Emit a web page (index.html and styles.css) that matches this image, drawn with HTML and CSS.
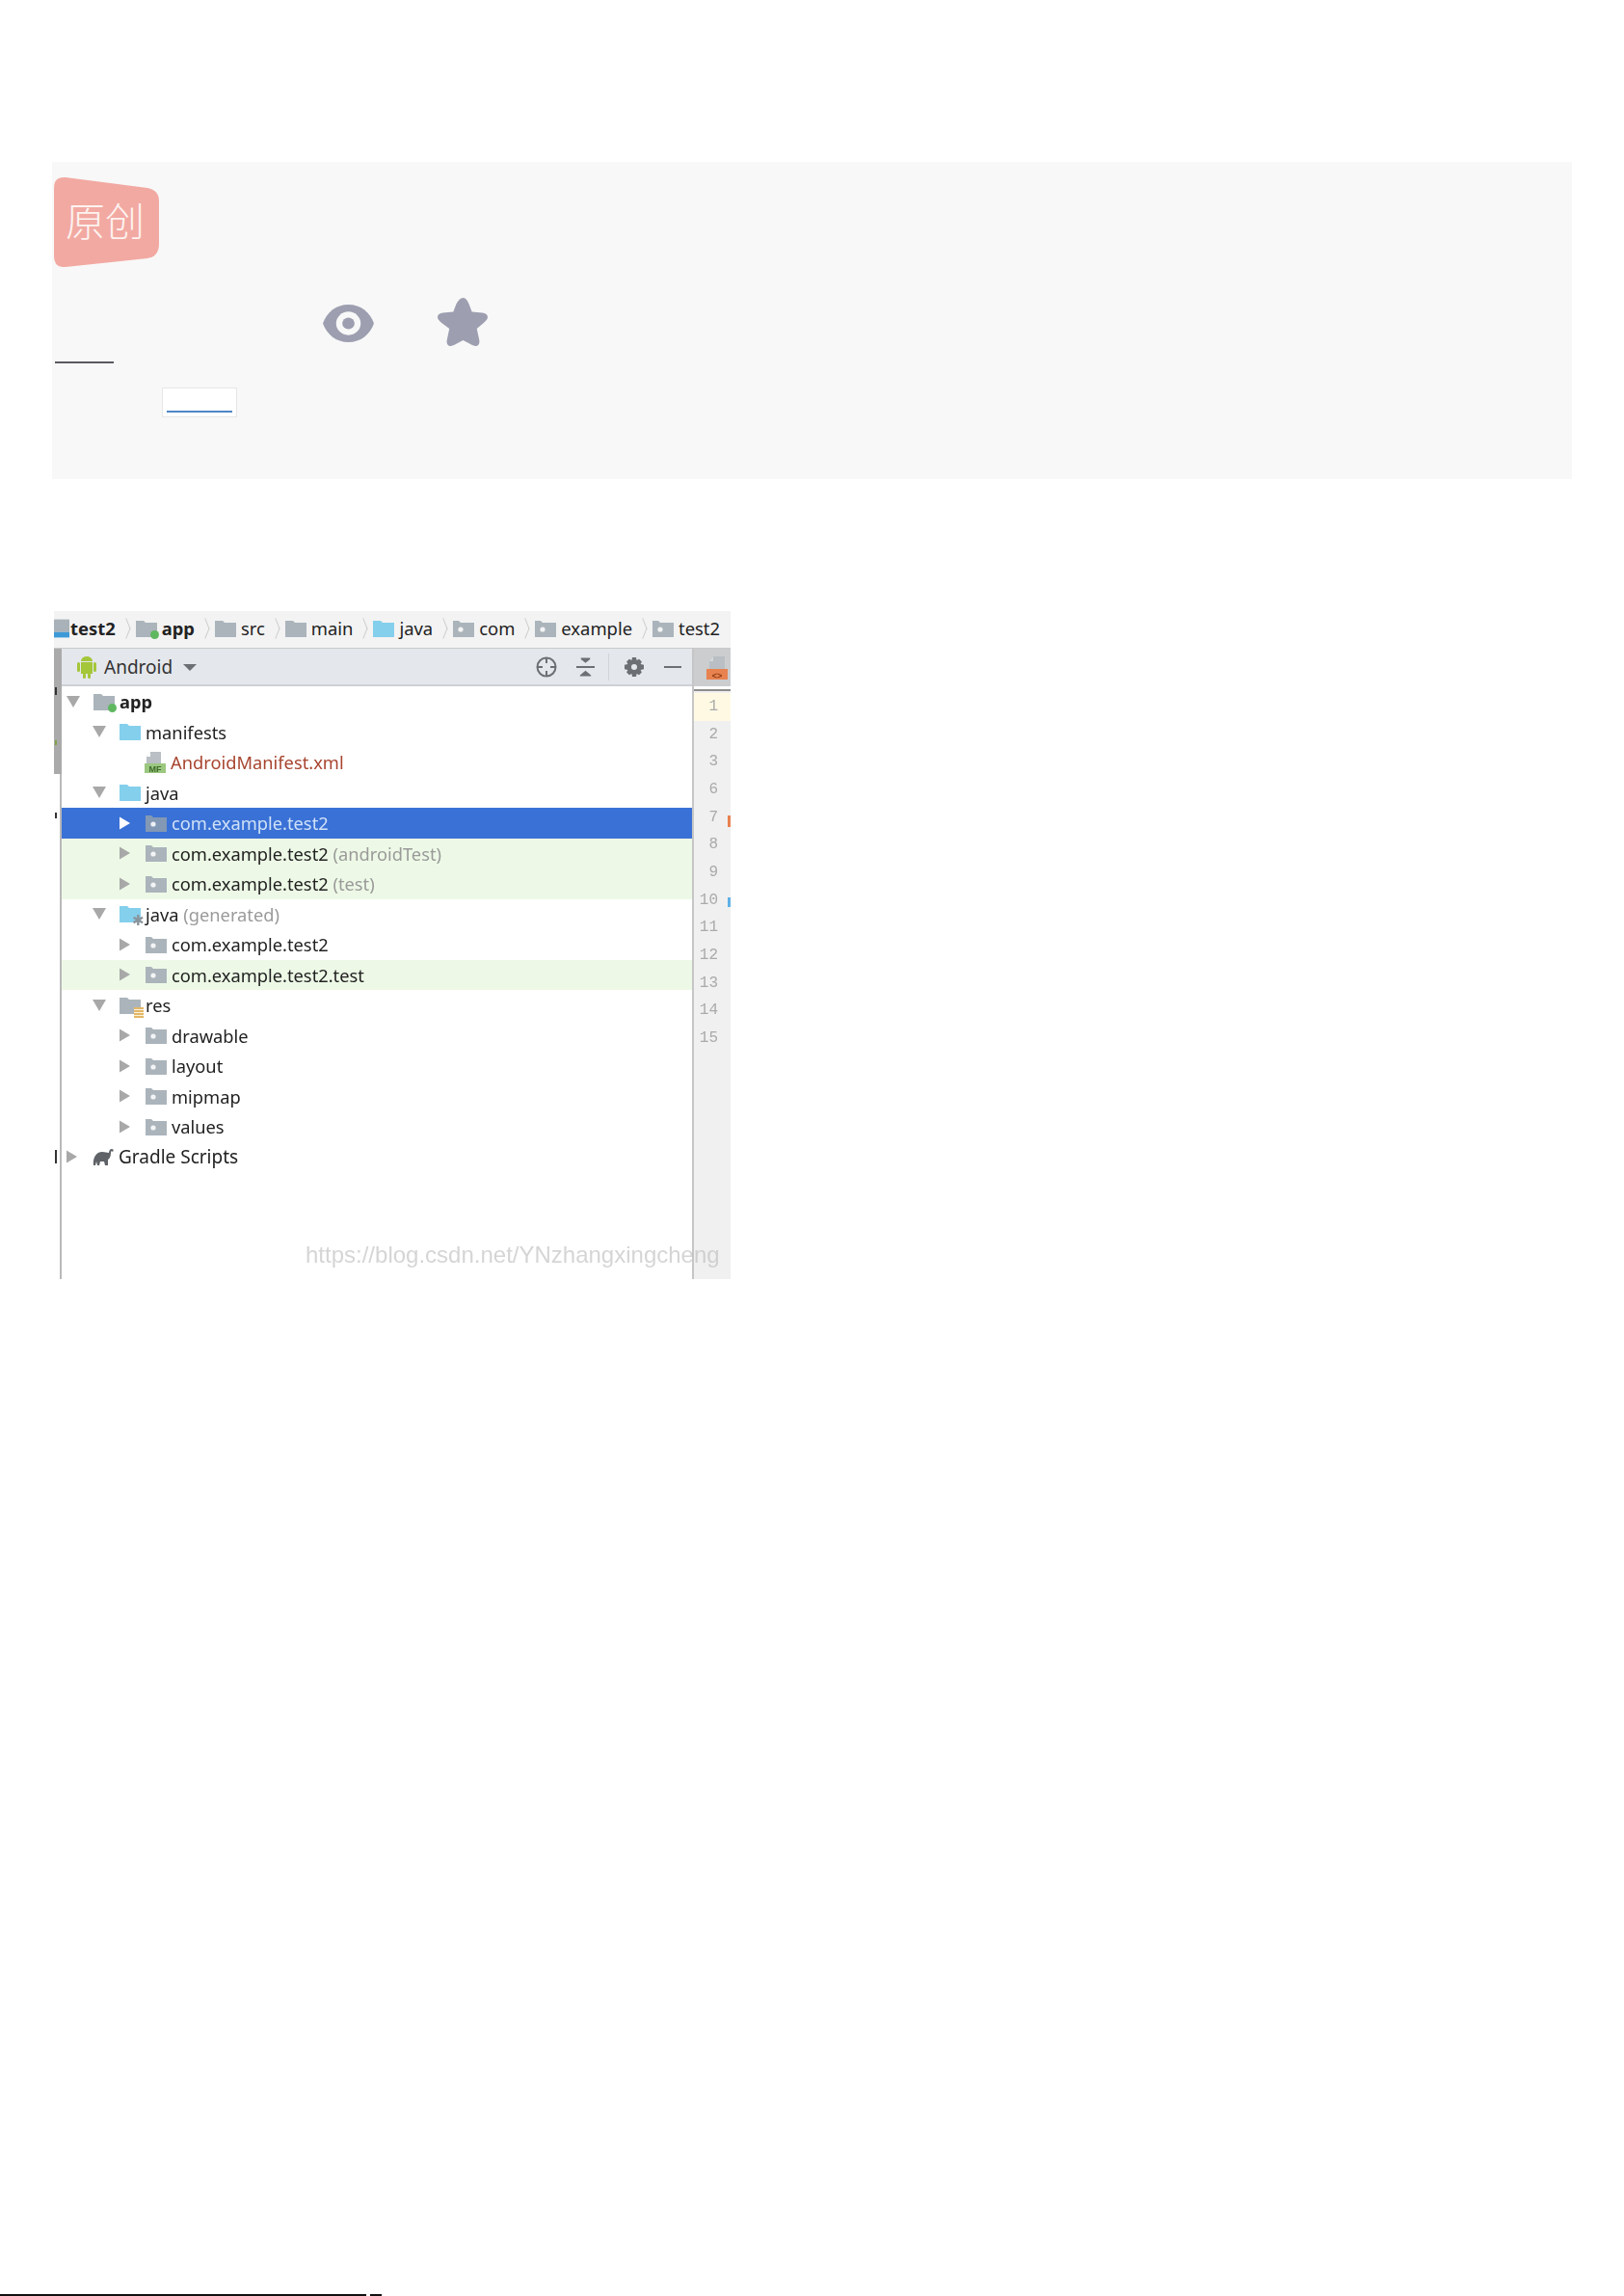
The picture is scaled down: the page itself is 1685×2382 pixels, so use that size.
FILE: index.html
```html
<!DOCTYPE html>
<html lang="zh">
<head>
<meta charset="utf-8">
<title>Android project</title>
<link rel="stylesheet" href="styles.css">
</head>
<body>
<svg class="defs" width="0" height="0">
  <symbol id="folder" viewBox="0 0 22 18"><path d="M0 1h8l2 2h12v15H0z"/></symbol>
  <symbol id="pkg" viewBox="0 0 22 18"><path d="M0 1h6l2 2h14v15H0z"/><circle cx="8" cy="10" r="2.6" fill="#fff" opacity=".85"/></symbol>
  <symbol id="tri-r" viewBox="0 0 12 14"><path d="M0 0l12 7-12 7z"/></symbol>
  <symbol id="tri-d" viewBox="0 0 14 12"><path d="M0 0h14L7 12z"/></symbol>
</svg>

<section class="panel">
  <div class="badge">
    <svg class="badge-shape" viewBox="0 0 109 94"><path d="M0 12Q0 0 12 1L97 12Q109 14 109 26V70Q109 83 97 85L12 94Q0 95 0 83z"/></svg>
    <span class="badge-text">原创</span>
  </div>
  <div class="stats">
    <svg class="eye" viewBox="0 0 50 40" preserveAspectRatio="none"><path d="M0 20C4 8 13 0 25 0s21 8 25 20c-4 12-13 20-25 20S4 32 0 20z" fill="#9d9fb0"/><ellipse cx="25" cy="20" rx="12" ry="12.500" fill="#f8f8f8"/><ellipse cx="25" cy="20" rx="6" ry="6.200" fill="#9d9fb0"/></svg>
    <svg class="star" viewBox="-1 0 52 50" preserveAspectRatio="none"><path d="M25 0c3 0 4.500 3 6 6.500l3 8 10.500 1c3.500.5 5.500 2 5.500 4.500 0 2-1.500 3.500-3.500 5.500L39 32l2.500 12c.5 3.500-1 6-3.500 6-2 0-4-1-6.500-2.500L25 44l-6.500 3.500C16 49 14 50 12 50c-2.500 0-4-2.500-3.500-6L11 32l-8.500-6.500C.5 23.500-1 22-1 20c0-2.500 2-4 5.500-4.500l10.500-1 3-8C20 3 22 0 25 0z" fill="#9d9fb0"/></svg>
  </div>
  <div class="rule-dark"></div>
  <div class="tag"><span class="tag-line"></span></div>
</section>

<figure class="shot">
  <nav class="crumbs">
    <svg class="crumb-module" viewBox="0 0 17 22"><path d="M0 1h17v14H0z" fill="#a9b2b8"/><path d="M0 15h17v6H0z" fill="#3d9ad6"/></svg>
    <b>test2</b><i class="chev"></i>
    <span class="ic-wrap"><svg class="fold grey"><use href="#folder"/></svg><span class="dot"></span></span><b>app</b><i class="chev"></i>
    <svg class="fold grey"><use href="#folder"/></svg><span>src</span><i class="chev"></i>
    <svg class="fold grey"><use href="#folder"/></svg><span>main</span><i class="chev"></i>
    <svg class="fold blue"><use href="#folder"/></svg><span>java</span><i class="chev"></i>
    <svg class="fold grey"><use href="#pkg"/></svg><span>com</span><i class="chev"></i>
    <svg class="fold grey"><use href="#pkg"/></svg><span>example</span><i class="chev"></i>
    <svg class="fold grey"><use href="#pkg"/></svg><span>test2</span>
  </nav>

  <div class="body">
    <div class="sliver"><div class="sliver-bar"></div><span class="mark m1"></span><span class="mark m2"></span><span class="mark m3"></span><span class="mark m4"></span></div>

    <div class="project">
      <header class="toolbar">
        <svg class="android" viewBox="0 0 20 24"><g fill="#a4c639"><rect x="4" y="7" width="12" height="12"/><path d="M4 6a6 5 0 0 1 12 0z"/><rect x="0" y="7" width="3" height="10" rx="1.500"/><rect x="17" y="7" width="3" height="10" rx="1.500"/><rect x="6" y="18" width="3" height="6" rx="1.500"/><rect x="11" y="18" width="3" height="6" rx="1.500"/></g></svg>
        <span class="tb-title">Android</span>
        <svg class="tb-caret" viewBox="0 0 14 7"><path d="M0 0h14L7 7z"/></svg>
        <span class="tb-gap"></span>
        <svg class="tb-ic target" viewBox="0 0 22 22" fill="none" stroke="#6c6f73" stroke-width="2"><circle cx="11" cy="11" r="9.500"/><path d="M11 1v6M11 15v6M1 11h6M15 11h6"/></svg>
        <svg class="tb-ic collapse" viewBox="0 0 20 20" fill="#6c6f73"><path d="M5 0h10v1.500l-5 4-5-4zM0 9h20v2H0zM10 14l6 5v1H4v-1z"/></svg>
        <span class="tb-div"></span>
        <svg class="tb-ic gear" viewBox="0 0 20 20"><path d="M8 0h4l.6 3 2.500-1.300 2.800 2.800L16.600 7l3.400.800v4.400l-3.400.800 1.300 2.500-2.800 2.800-2.500-1.300L12 20H8l-.6-3-2.500 1.300-2.800-2.800L3.400 13 0 12.200V7.800L3.400 7 2.100 4.500l2.800-2.800L7.400 3z" fill="#6c6f73"/><circle cx="10" cy="10" r="3" fill="#e4e7ec"/></svg>
        <span class="minus"></span>
      </header>

      <ul class="tree">
        <li class="row l0 strong"><svg class="tw down"><use href="#tri-d"/></svg><span class="ic-wrap"><svg class="node grey"><use href="#folder"/></svg><span class="dot"></span></span><span class="lbl">app</span></li>
        <li class="row l1"><svg class="tw down"><use href="#tri-d"/></svg><svg class="node blue"><use href="#folder"/></svg><span class="lbl">manifests</span></li>
        <li class="row l2 leaf"><svg class="node-file" viewBox="0 0 22 22"><path d="M6 0h11v12H2V5z" fill="#b9bfc4"/><path d="M6 0v5H2z" fill="#fff"/><rect y="12" width="22" height="10" fill="#9cc77f"/><text x="11" y="21" class="mf">MF</text></svg><span class="lbl red">AndroidManifest.xml</span></li>
        <li class="row l1"><svg class="tw down"><use href="#tri-d"/></svg><svg class="node blue"><use href="#folder"/></svg><span class="lbl">java</span></li>
        <li class="row l2 sel"><svg class="tw right"><use href="#tri-r"/></svg><svg class="node grey"><use href="#pkg"/></svg><span class="lbl">com.example.test2</span></li>
        <li class="row l2 green"><svg class="tw right"><use href="#tri-r"/></svg><svg class="node grey"><use href="#pkg"/></svg><span class="lbl">com.example.test2 <em>(androidTest)</em></span></li>
        <li class="row l2 green"><svg class="tw right"><use href="#tri-r"/></svg><svg class="node grey"><use href="#pkg"/></svg><span class="lbl">com.example.test2 <em>(test)</em></span></li>
        <li class="row l1"><svg class="tw down"><use href="#tri-d"/></svg><span class="ic-wrap"><svg class="node blue"><use href="#folder"/></svg><span class="gen">✱</span></span><span class="lbl">java <em>(generated)</em></span></li>
        <li class="row l2"><svg class="tw right"><use href="#tri-r"/></svg><svg class="node grey"><use href="#pkg"/></svg><span class="lbl">com.example.test2</span></li>
        <li class="row l2 green"><svg class="tw right"><use href="#tri-r"/></svg><svg class="node grey"><use href="#pkg"/></svg><span class="lbl">com.example.test2.test</span></li>
        <li class="row l1"><svg class="tw down"><use href="#tri-d"/></svg><span class="ic-wrap"><svg class="node grey"><use href="#folder"/></svg><span class="stack"></span></span><span class="lbl">res</span></li>
        <li class="row l2"><svg class="tw right"><use href="#tri-r"/></svg><svg class="node grey"><use href="#pkg"/></svg><span class="lbl">drawable</span></li>
        <li class="row l2"><svg class="tw right"><use href="#tri-r"/></svg><svg class="node grey"><use href="#pkg"/></svg><span class="lbl">layout</span></li>
        <li class="row l2"><svg class="tw right"><use href="#tri-r"/></svg><svg class="node grey"><use href="#pkg"/></svg><span class="lbl">mipmap</span></li>
        <li class="row l2"><svg class="tw right"><use href="#tri-r"/></svg><svg class="node grey"><use href="#pkg"/></svg><span class="lbl">values</span></li>
        <li class="row l0 gradle"><svg class="tw right"><use href="#tri-r"/></svg><svg class="node-gradle" viewBox="0 0 22 18"><path d="M1 18C0 10 4 4 10 4c3 0 5 1 7 1 0-2 1-4 3-4s2 2 1 3c-1-1-2-1-2 1 0 3-1 6-3 7v6h-3l-1-4H8l-1 4H5l-1-4-1 4z" fill="#5f6367"/></svg><span class="lbl">Gradle Scripts</span></li>
      </ul>
    </div>

    <aside class="editor">
      <div class="tab"><svg class="tab-ic" viewBox="0 0 22 24"><path d="M7 0h12v13H3V5z" fill="#b9bfc4"/><path d="M7 0v5H3z" fill="#d6d8da"/><rect y="13" width="22" height="11" fill="#e8824f"/><text x="11" y="22.500" class="xml">&lt;&gt;</text></svg></div>
      <div class="tab-line"></div>
      <ol class="gutter">
        <li class="cur">1</li><li>2</li><li>3</li><li>6</li><li>7</li><li>8</li><li>9</li><li>10</li><li>11</li><li>12</li><li>13</li><li>14</li><li>15</li>
      </ol>
      <span class="fold-o"></span>
      <span class="fold-b"></span>
    </aside>
  </div>
  <span class="wm">https://blog.csdn.net/YNzhangxingcheng</span>
</figure>

<div class="foot"><span class="foot-a"></span><span class="foot-b"></span></div>
</body>
</html>
```

FILE: styles.css
```css
* { box-sizing: border-box; }
html, body { margin: 0; padding: 0; background: #fff; }
body { width: 1685px; height: 2382px; position: relative; overflow: hidden; font-family: "Noto Sans", "Open Sans", sans-serif; color: #222; }
.defs { position: absolute; }
ul, ol { list-style: none; margin: 0; padding: 0; }
em { font-style: normal; color: #9a9a9a; }

/* top panel */
.panel { position: relative; margin: 168px 0 0 54px; width: 1577px; height: 329px; background: #f8f8f8; }
.badge { position: relative; margin-left: 2px; padding-top: 15px; width: 109px; height: 109px; }
.badge-shape { display: block; width: 109px; height: 94px; fill: #f2a9a2; }
.badge-text { position: absolute; left: 12px; top: 35px; font-family: "Noto Sans CJK SC", sans-serif; font-weight: 300; font-size: 41px; line-height: 48px; color: #fdf3f0; }
.stats { display: flex; align-items: center; margin: 32px 0 0 281px; height: 50px; gap: 66px; }
.eye { width: 53px; height: 39px; margin-top: 3px; }
.star { width: 53px; height: 50px; }
.rule-dark { width: 61px; height: 2px; margin: 16px 0 0 3px; background: #5a5a62; }
.tag { margin: 25px 0 0 114px; width: 78px; height: 31px; background: #fff; border: 1px solid #e6e6e6; padding: 23px 0 0 4px; }
.tag-line { display: block; width: 68px; height: 2px; background: #4f86c6; }

/* screenshot */
.shot { position: relative; margin: 137px 0 0 56px; width: 702px; height: 693px; overflow: hidden; filter: blur(.35px); font-size: 18.3px; }
.crumbs { display: flex; align-items: center; height: 39px; padding-bottom: 3px; background: #f3f3f3; border-bottom: 1px solid #c9c9c9; white-space: nowrap; font-size: 18.4px; }
.crumb-module { flex: none; width: 16px; height: 22px; margin-right: 1px; }
.fold { flex: none; display: block; width: 22px; height: 18px; }
.grey { fill: #abb4bb; }
.blue { fill: #84cfec; }
.chev { display: block; flex: none; width: 16px; height: 16px; border-top: 2px solid #cfcfcf; border-right: 2px solid #cfcfcf; transform: scaleX(.4) rotate(45deg); margin: 0 2px 0 3px; }
.crumbs b { font-weight: 700; }
.crumbs .fold, .crumbs .ic-wrap { margin-right: 5px; }
.crumbs .ic-wrap .fold { margin-right: 0; }
.ic-wrap { position: relative; display: block; flex: none; width: 22px; height: 18px; }
.ic-wrap svg { display: block; width: 22px; height: 18px; }
.dot { position: absolute; right: -2px; bottom: -2px; width: 9px; height: 9px; border-radius: 50%; background: #5fb760; }
.gen { position: absolute; right: -4px; bottom: -5px; font-size: 15px; line-height: 15px; color: #8a949c; }
.stack { position: absolute; right: -3px; bottom: -4px; width: 10px; height: 11px; background: repeating-linear-gradient(#e3b766 0 2px, #fbf3df 2px 3px); }

.body { position: relative; display: flex; height: 654px; }
.sliver { position: relative; flex: none; width: 8px; background: #fff; border-right: 2px solid #b9b9b9; }
.sliver-bar { height: 130px; background: #aaa; margin-right: -2px; }
.mark { position: absolute; left: 1px; width: 2px; background: #333; }
.m1 { top: 40px; height: 8px; }
.m2 { top: 95px; height: 5px; background: #7fa34c; }
.m3 { top: 170px; height: 6px; }
.m4 { top: 520px; height: 14px; }

.project { flex: none; width: 656px; display: flex; flex-direction: column; border-right: 2px solid #c6c6c6; }
.toolbar { display: flex; align-items: center; height: 39px; flex: none; padding: 0 11px 0 16px; background: #e4e7ec; border-bottom: 2px solid #cdd0d4; }
.android { flex: none; width: 20px; height: 24px; margin-right: 8px; }
.tb-title { font-size: 19px; color: #333; }
.tb-caret { flex: none; width: 14px; height: 7px; margin: 2px 0 0 11px; fill: #6c6f73; }
.tb-gap { flex: 1; }
.tb-ic { flex: none; }
.target { width: 22px; height: 22px; }
.collapse { width: 19px; height: 20px; margin-left: 20px; }
.tb-div { width: 1px; height: 28px; background: #cfd2d6; margin: 0 16px 0 14px; }
.gear { width: 20px; height: 20px; }
.minus { width: 18px; height: 2px; margin-left: 21px; background: #6c6f73; }

.tree { flex: 1; }
.row { display: flex; align-items: center; height: 31.5px; white-space: nowrap; font-size: 18.3px; }
.l0 { padding-left: 5px; }
.l1 { padding-left: 32px; }
.l2 { padding-left: 60px; }
.leaf { padding-left: 86px; }
.strong .lbl { font-weight: 700; }
.gradle { font-size: 19px; }
.tw { flex: none; fill: #a8a8a8; margin-right: 14px; }
.tw.down { width: 14px; height: 12px; }
.tw.right { width: 11px; height: 14px; margin-right: 16px; }
.node { display: block; flex: none; width: 22px; height: 18px; }
.node-file { flex: none; width: 22px; height: 22px; }
.node-gradle { flex: none; width: 22px; height: 18px; }
.mf { font-family: "Liberation Sans", sans-serif; font-size: 9px; font-weight: 700; text-anchor: middle; fill: #3d6b2c; }
.xml { font-family: "Liberation Sans", sans-serif; font-size: 9px; font-weight: 700; text-anchor: middle; fill: #8a3a12; }
.lbl { margin-left: 5px; }
.red { color: #a8452f; }
.sel { background: #3a71d6; color: #cfe1f7; }
.sel .tw { fill: #fff; }
.sel .node { fill: #8298b4; }
.green { background: #edf9e6; }

.editor { position: relative; flex: 1; background: #f0f0f0; }
.tab { display: flex; align-items: center; justify-content: flex-end; height: 39px; padding-right: 3px; background: #cbcdcf; }
.tab-ic { flex: none; width: 22px; height: 24px; }
.tab-line { height: 5px; background: #fff; border-bottom: 2px solid #8c8c8c; }
.gutter { font-family: "Liberation Mono", monospace; font-size: 16px; color: #aaa; padding-top: 2px; }
.gutter li { height: 28.67px; line-height: 28.67px; padding-right: 13px; text-align: right; }
.gutter .cur { background: #fff9e4; }
.fold-o { position: absolute; right: 0; top: 173px; width: 3px; height: 12px; background: #e8824f; }
.fold-b { position: absolute; right: 0; top: 258px; width: 3px; height: 10px; background: #5fb0e6; }
.wm { position: absolute; left: 261px; top: 654px; font-family: "Liberation Sans", sans-serif; font-size: 24px; line-height: 28px; color: rgba(190,190,190,.65); white-space: nowrap; }

.foot { position: absolute; left: 0; bottom: 0; display: flex; gap: 4px; }
.foot-a { width: 380px; height: 2px; background: #111; }
.foot-b { width: 12px; height: 2px; background: #111; }
```
